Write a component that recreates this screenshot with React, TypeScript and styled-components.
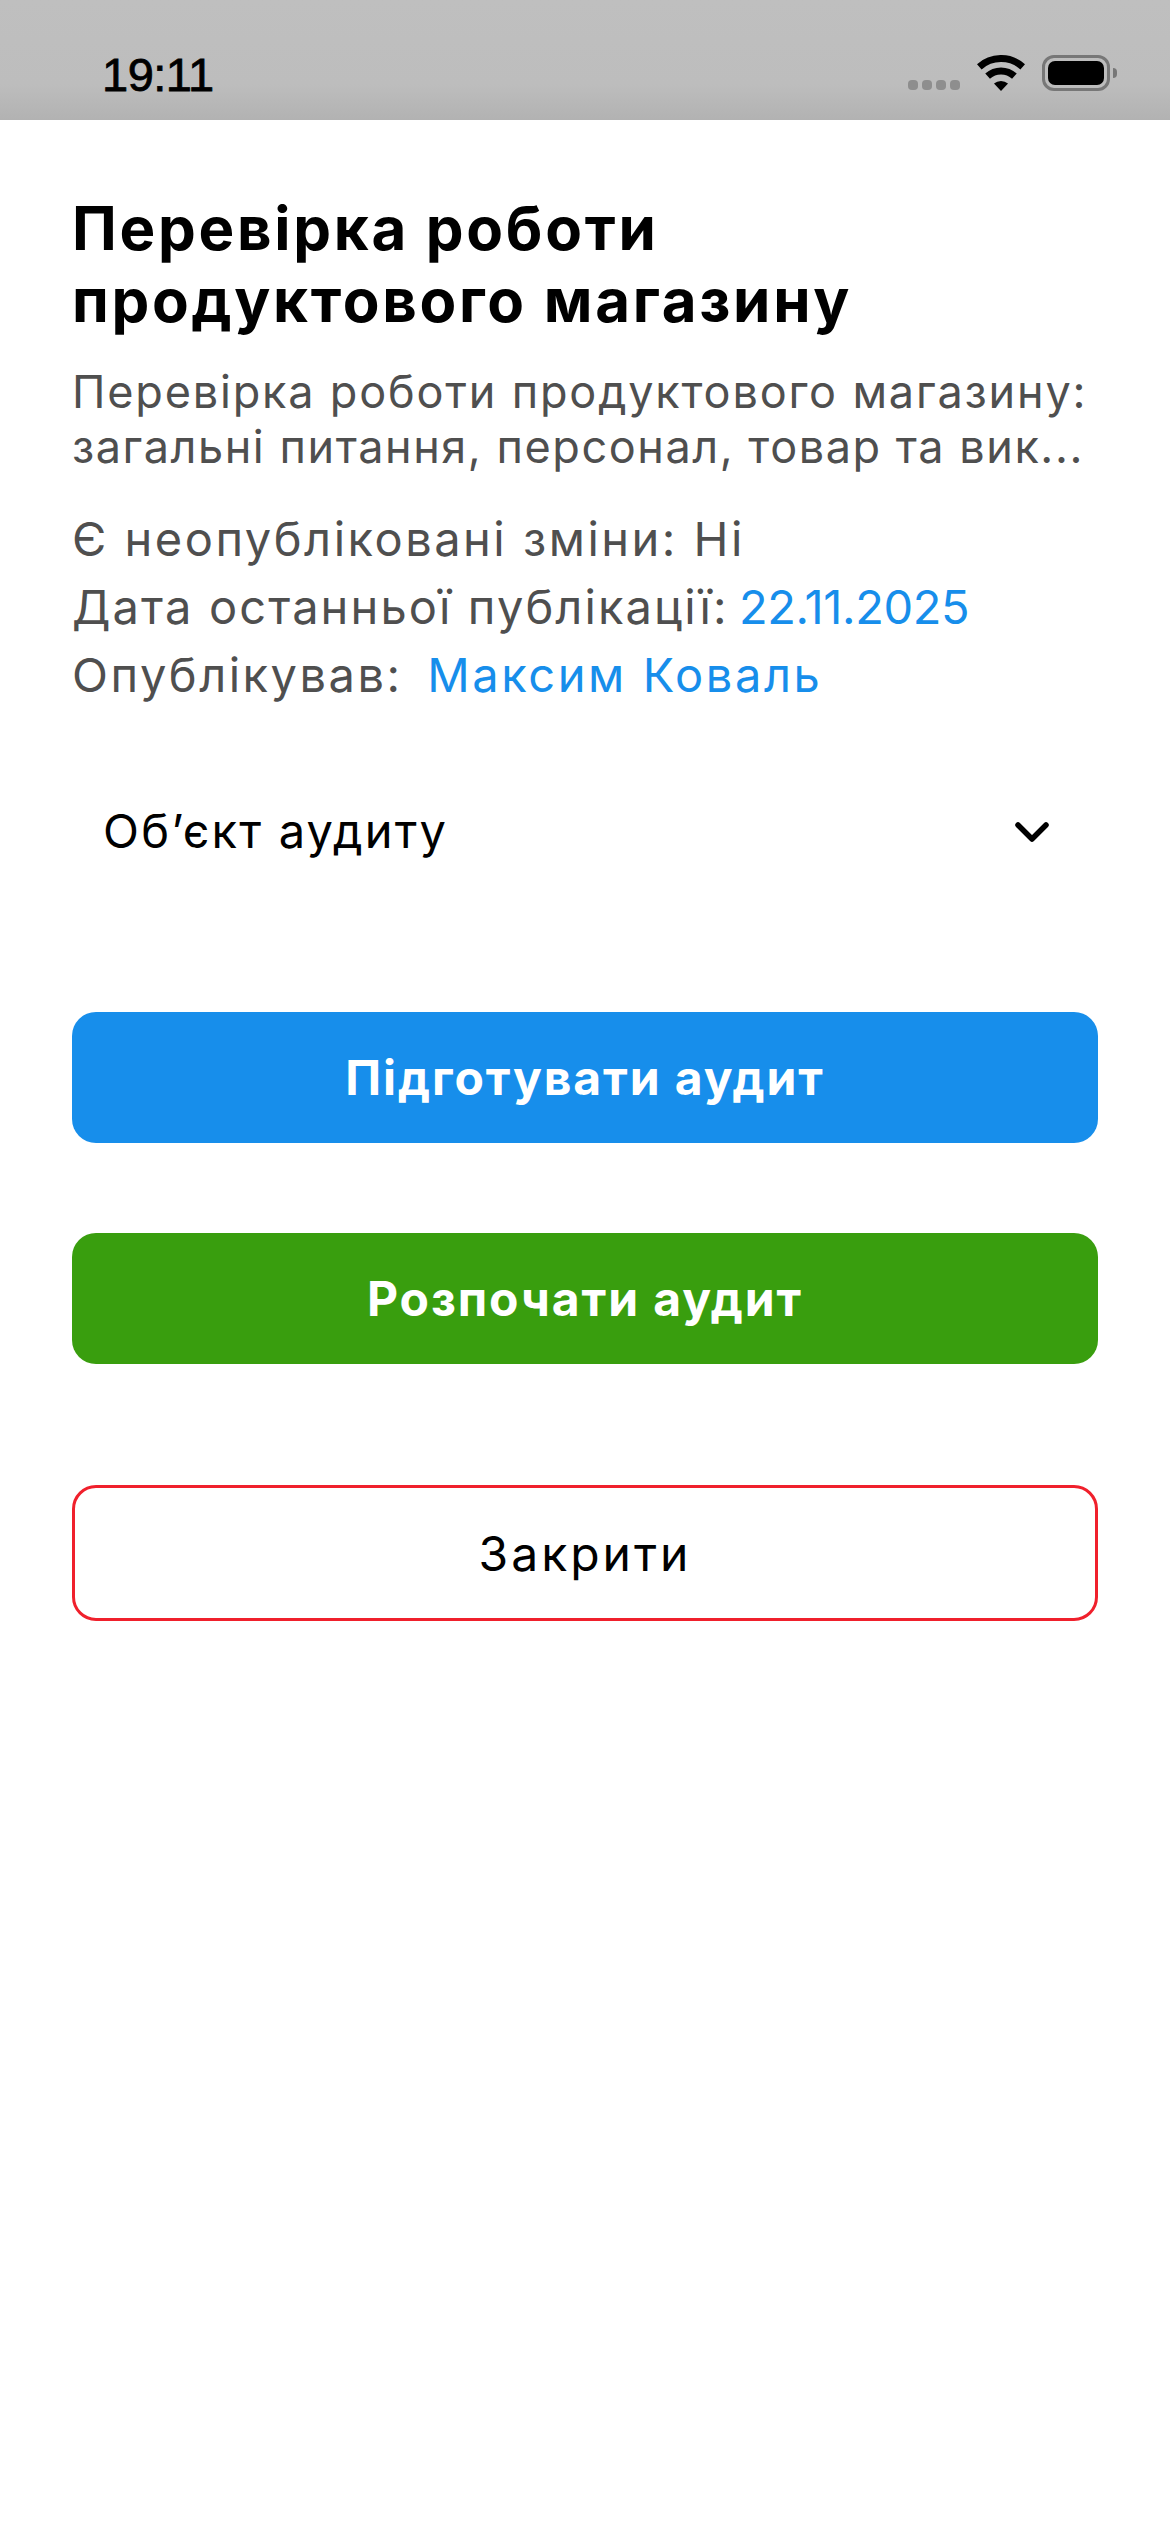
import React from "react"
import styled, { createGlobalStyle } from "styled-components"

const GlobalStyle = createGlobalStyle`
  html, body {
    margin: 0;
    padding: 0;
    background: #ffffff;
    font-family: Inter, "Noto Sans", sans-serif;
  }
  * {
    box-sizing: border-box;
  }
`

const WifiIcon: React.FC = () => (
  <svg width="48" height="36" viewBox="0 0 48 36">
    <g fill="none" stroke="#000" strokeWidth="7">
      <path d="M2.3 11.8A32.5 32.5 0 0 1 45.7 11.8" />
      <path d="M10.6 21.1A20 20 0 0 1 37.4 21.1" />
    </g>
    <path d="M24 36L17 28.6A10.5 10.5 0 0 1 31 28.6Z" fill="#000" />
  </svg>
)

const ChevronIcon: React.FC = () => (
  <ChevronSvg width="36" height="24" viewBox="0 0 36 24">
    <path
      d="M4 4L18 18L32 4"
      fill="none"
      stroke="#000"
      strokeWidth="5.5"
      strokeLinecap="round"
      strokeLinejoin="round"
    />
  </ChevronSvg>
)

export default function App() {
  return (
    <>
      <GlobalStyle />
      <Page>
        <StatusBar>
          <Clock>19:11</Clock>
          <StatusIcons>
            <Signal>
              <SignalDot />
              <SignalDot />
              <SignalDot />
              <SignalDot />
            </Signal>
            <WifiIcon />
            <Battery>
              <BatteryFill />
            </Battery>
          </StatusIcons>
        </StatusBar>
        <Content>
          <Title>
            Перевірка роботи
            <br />
            продуктового магазину
          </Title>
          <Description>
            <DescriptionLine $tracking={1.82}>
              Перевірка роботи продуктового магазину:
            </DescriptionLine>
            <DescriptionLine $tracking={1.55}>
              загальні питання, персонал, товар та вик...
            </DescriptionLine>
          </Description>
          <Meta>
            <MetaRow $tracking={2.5}>Є неопубліковані зміни: Ні</MetaRow>
            <MetaRow $tracking={2.1}>
              Дата останньої публікації: <DateValue>22.11.2025</DateValue>
            </MetaRow>
            <MetaRow $tracking={2.5}>
              Опублікував: <AuthorLink>Максим Коваль</AuthorLink>
            </MetaRow>
          </Meta>
          <Select>
            <SelectLabel>Об’єкт аудиту</SelectLabel>
            <ChevronIcon />
          </Select>
          <ActionList>
            <PrimaryButton $color="#178eeb">Підготувати аудит</PrimaryButton>
            <PrimaryButton $color="#399e0e">Розпочати аудит</PrimaryButton>
          </ActionList>
          <CloseButton>Закрити</CloseButton>
        </Content>
      </Page>
    </>
  )
}

const Page = styled.div`
  width: 1170px;
  height: 2532px;
  background: #ffffff;
  overflow: hidden;
`

const StatusBar = styled.div`
  height: 120px;
  padding: 50px 60px 0 102px;
  display: flex;
  justify-content: space-between;
  align-items: flex-start;
  background: linear-gradient(180deg, #bfbfbf 0%, #bdbdbd 70%, #b2b2b2 100%);
`

const Clock = styled.span`
  font-family: "Liberation Sans", Arial, sans-serif;
  font-size: 47px;
  line-height: 50px;
  font-weight: 400;
  letter-spacing: -0.5px;
  color: #000000;
  -webkit-text-stroke: 0.8px #000;
`

const StatusIcons = styled.div`
  display: flex;
  align-items: flex-end;
  gap: 17px;
  padding-top: 5px;
`

const Signal = styled.div`
  display: flex;
  gap: 4px;
  padding-bottom: 1px;
`

const SignalDot = styled.span`
  width: 10px;
  height: 10px;
  border-radius: 4px;
  background: #8e8e8e;
`

const Battery = styled.div`
  position: relative;
  width: 68px;
  height: 36px;
  padding: 3px;
  border: 3px solid #777777;
  border-radius: 12px;

  &::after {
    content: "";
    position: absolute;
    right: -10px;
    top: 10px;
    width: 4px;
    height: 10px;
    border-radius: 0 4px 4px 0;
    background: #777777;
  }
`

const BatteryFill = styled.div`
  width: 100%;
  height: 100%;
  border-radius: 7px;
  background: #000000;
`

const Content = styled.div`
  padding: 72px 72px 0;
  display: flex;
  flex-direction: column;
`

const Title = styled.h1`
  margin: 0;
  font-size: 60px;
  line-height: 72px;
  font-weight: 700;
  letter-spacing: 2.7px;
  color: #000000;
  white-space: nowrap;
`

const Description = styled.div`
  margin-top: 28px;
  display: flex;
  flex-direction: column;
`

const DescriptionLine = styled.span<{ $tracking: number }>`
  font-size: 45px;
  line-height: 55px;
  font-weight: 400;
  letter-spacing: ${(p) => p.$tracking}px;
  color: #4f4f4f;
  white-space: nowrap;
`

const Meta = styled.div`
  margin-top: 31px;
  display: flex;
  flex-direction: column;
`

const MetaRow = styled.div<{ $tracking: number }>`
  font-size: 47px;
  line-height: 68px;
  font-weight: 400;
  letter-spacing: ${(p) => p.$tracking}px;
  color: #4f4f4f;
  white-space: pre;
`

const DateValue = styled.span`
  margin-left: -5px;
  color: #178eeb;
  letter-spacing: -0.4px;
`

const AuthorLink = styled.span`
  margin-left: 9px;
  color: #178eeb;
  letter-spacing: 2.6px;
`

const Select = styled.div`
  margin-top: 77px;
  height: 88px;
  padding: 0 48px 0 31px;
  display: flex;
  align-items: center;
  justify-content: space-between;
`

const SelectLabel = styled.span`
  font-size: 47px;
  letter-spacing: 2.2px;
  color: #000000;
`

const ChevronSvg = styled.svg`
  margin-top: 5px;
`

const ActionList = styled.div`
  margin-top: 138px;
  display: flex;
  flex-direction: column;
  gap: 90px;
`

const PrimaryButton = styled.button<{ $color: string }>`
  height: 131px;
  border: none;
  border-radius: 24px;
  background: ${(p) => p.$color};
  color: #ffffff;
  font-family: inherit;
  font-size: 48px;
  font-weight: 700;
  letter-spacing: 1.9px;
`

const CloseButton = styled.button`
  margin-top: 121px;
  height: 136px;
  border: 3px solid #f0202c;
  border-radius: 24px;
  background: #ffffff;
  color: #000000;
  font-family: inherit;
  font-size: 48px;
  font-weight: 400;
  letter-spacing: 3px;
`
